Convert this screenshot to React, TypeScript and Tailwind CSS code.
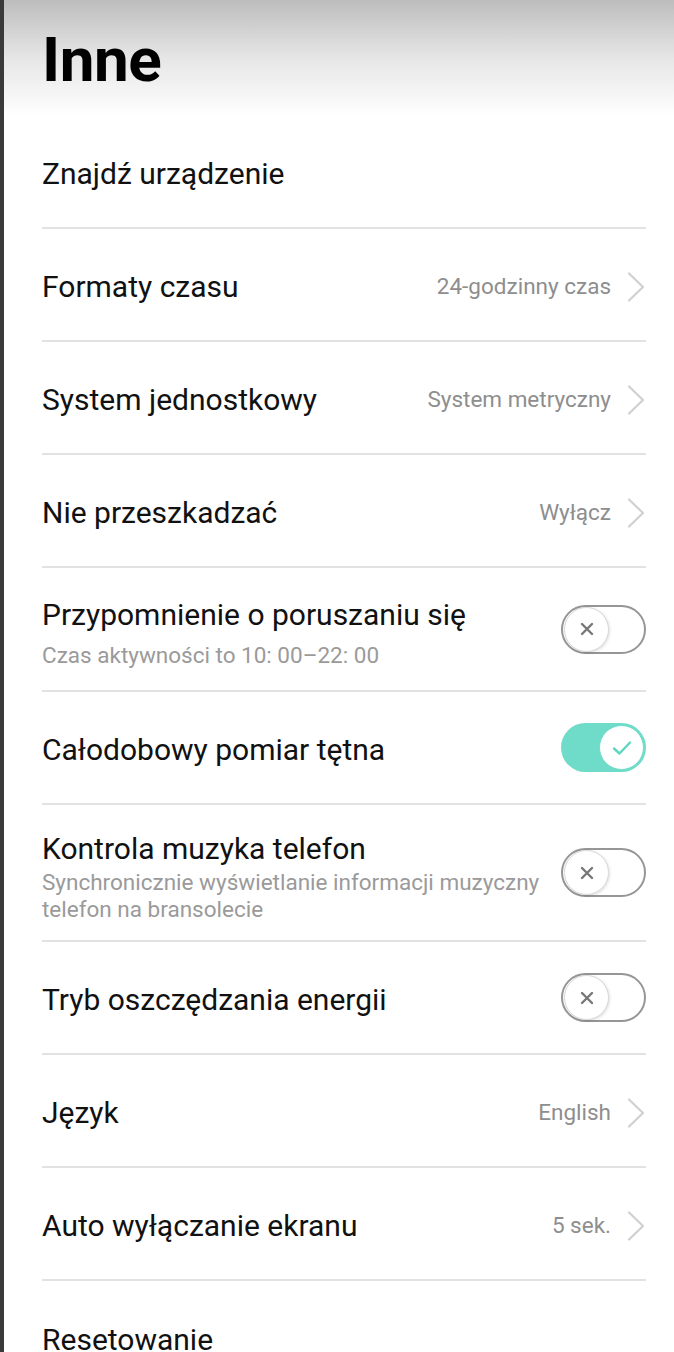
import { ReactNode } from "react";

type Row =
  | { kind: "plain"; title: string }
  | { kind: "value"; title: string; value: string }
  | { kind: "toggle"; title: string; on: boolean; sub?: ReactNode; h: string; pt: string };

const ROWS: Row[] = [
  { kind: "plain", title: "Znajdź urządzenie" },
  { kind: "value", title: "Formaty czasu", value: "24-godzinny czas" },
  { kind: "value", title: "System jednostkowy", value: "System metryczny" },
  { kind: "value", title: "Nie przeszkadzać", value: "Wyłącz" },
  {
    kind: "toggle",
    title: "Przypomnienie o poruszaniu się",
    on: false,
    sub: "Czas aktywności to 10: 00–22: 00",
    h: "h-[122px]",
    pt: "pt-[28px]",
  },
  { kind: "toggle", title: "Całodobowy pomiar tętna", on: true, h: "h-[111px]", pt: "pt-[5px]" },
  {
    kind: "toggle",
    title: "Kontrola muzyka telefon",
    on: false,
    sub: (
      <>
        Synchronicznie wyświetlanie informacji muzyczny
        <br />
        telefon na bransolecie
      </>
    ),
    h: "h-[135px]",
    pt: "pt-[25px]",
  },
  { kind: "toggle", title: "Tryb oszczędzania energii", on: false, h: "h-[111px]", pt: "pt-[5px]" },
  { kind: "value", title: "Język", value: "English" },
  { kind: "value", title: "Auto wyłączanie ekranu", value: "5 sek." },
];

function Chevron() {
  return (
    <svg width="20" height="30" viewBox="0 0 20 30" fill="none" className="shrink-0">
      <path d="M3 1.5 L17 15 L3 28.5" stroke="#d0d0d0" strokeWidth="2.2" strokeLinecap="round" strokeLinejoin="round" />
    </svg>
  );
}

function Toggle({ on }: { on: boolean }) {
  if (on) {
    return (
      <div className="relative w-[85px] h-[49px] rounded-full bg-[#6edcc8] shrink-0">
        <div className="absolute right-[2px] top-[2px] w-[45px] h-[45px] rounded-full bg-white border border-[#6edcc8] flex items-center justify-center">
          <svg width="20" height="16" viewBox="0 0 20 16" fill="none">
            <path d="M2 8.5 L7.5 13.5 L18 2.5" stroke="#5fd6c0" strokeWidth="2.4" strokeLinecap="round" strokeLinejoin="round" />
          </svg>
        </div>
      </div>
    );
  }
  return (
    <div className="relative w-[85px] h-[49px] rounded-full bg-white border-2 border-[#969696] shrink-0">
      <div className="absolute left-[1px] top-[0px] w-[45px] h-[45px] rounded-full bg-white border border-[#d8d8d8] shadow-[1px_1px_3px_rgba(0,0,0,0.12)] flex items-center justify-center">
        <svg width="14" height="14" viewBox="0 0 14 14" fill="none">
          <path d="M2 2 L12 12 M12 2 L2 12" stroke="#777" strokeWidth="2.4" strokeLinecap="round" />
        </svg>
      </div>
    </div>
  );
}

function Divider() {
  return <div className="h-[2px] bg-[#e2e2e2]" />;
}

export default function App() {
  return (
    <div
      className="min-h-[1352px] bg-white border-l-4 border-[#3a3a3a] overflow-hidden"
      style={{ fontFamily: "Roboto, 'Noto Sans', sans-serif" }}
    >
      {/* Header */}
      <div className="h-[116px] pt-[29px] px-[38px] bg-gradient-to-b from-[#bdbdbd] via-[#e6e6e6] to-white">
        <h1 className="text-[62px] leading-[62px] font-bold text-black tracking-[-0.5px]">Inne</h1>
      </div>

      {/* Settings list */}
      <div className="px-[38px] pr-[28px]">
        {ROWS.map((r) => (
          <div key={r.title}>
            {r.kind === "plain" && (
              <div className="h-[111px] pt-[5px] flex items-center">
                <span className="text-[30px] leading-[38px] text-[#111]">{r.title}</span>
              </div>
            )}
            {r.kind === "value" && (
              <div className="h-[111px] pt-[5px] flex items-center justify-between">
                <span className="text-[30px] leading-[38px] text-[#111]">{r.title}</span>
                <div className="flex items-center gap-[15px]">
                  <span className="text-[22.5px] text-[#8e8e8e]">{r.value}</span>
                  <Chevron />
                </div>
              </div>
            )}
            {r.kind === "toggle" && (
              <div className={`${r.h} flex justify-between ${r.sub ? "items-start" : "items-center"}`}>
                <div className={r.pt}>
                  <div className="text-[30px] leading-[38px] text-[#111]">{r.title}</div>
                  {r.sub && (
                    <div
                      className={`text-[22.5px] leading-[27px] text-[#9a9a9a] ${
                        r.title.startsWith("Przyp") ? "mt-[8px]" : "mt-[1px]"
                      }`}
                    >
                      {r.sub}
                    </div>
                  )}
                </div>
                <div className="self-center">
                  <Toggle on={r.on} />
                </div>
              </div>
            )}
            <Divider />
          </div>
        ))}
        <div className="pt-[40px]">
          <span className="text-[30px] leading-[38px] text-[#111]">Resetowanie</span>
        </div>
      </div>
    </div>
  );
}
